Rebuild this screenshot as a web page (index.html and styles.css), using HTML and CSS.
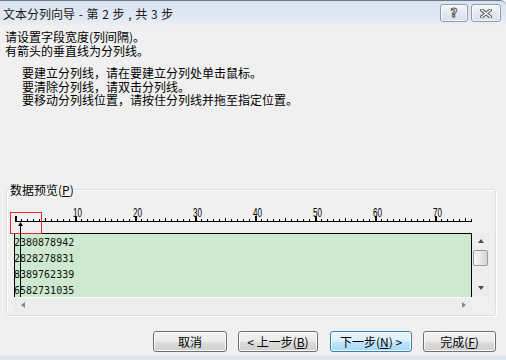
FILE: index.html
```html
<!DOCTYPE html>
<html lang="zh-CN">
<head>
<meta charset="utf-8">
<title>文本分列向导</title>
<link rel="stylesheet" href="styles.css">
</head>
<body>
<div class="window">
  <div class="titlebar">
    <span class="title">文本分列向导 - 第 2 步 , 共 3 步</span>
    <div class="caption-btns">
      <span class="cap-btn help">?</span>
      <span class="cap-btn close">
        <svg width="12" height="9" viewBox="0 0 12 9"><path d="M1.5 1 L10.5 8 M10.5 1 L1.5 8" stroke="#555" stroke-width="3.4" stroke-linecap="square"/><path d="M1.5 1 L10.5 8 M10.5 1 L1.5 8" stroke="#fff" stroke-width="1.4" stroke-linecap="square"/></svg>
      </span>
    </div>
  </div>

  <div class="intro">
    <p>请设置字段宽度(列间隔)。<br>有箭头的垂直线为分列线。</p>
    <p class="hints">要建立分列线，请在要建立分列处单击鼠标。<br>要清除分列线，请双击分列线。<br>要移动分列线位置，请按住分列线并拖至指定位置。</p>
  </div>

  <fieldset class="group">
    <legend>数据预览(<u>P</u>)</legend>
    <div class="preview">
      <svg class="ruler" width="458" height="28" viewBox="0 0 458 28">
        <defs>
          <pattern id="minor" x="1" y="14" width="6" height="2" patternUnits="userSpaceOnUse">
            <rect width="1" height="2" fill="#000"/>
          </pattern>
        </defs>
        <rect x="1" y="14" width="457" height="2" fill="url(#minor)"/>
        <rect x="1" y="16" width="457" height="1" fill="#000"/>
        <g fill="#000">
          <rect x="1" y="11" width="2" height="5"/>
          <rect x="61" y="11" width="2" height="5"/>
          <rect x="121" y="11" width="2" height="5"/>
          <rect x="181" y="11" width="2" height="5"/>
          <rect x="241" y="11" width="2" height="5"/>
          <rect x="301" y="11" width="2" height="5"/>
          <rect x="361" y="11" width="2" height="5"/>
          <rect x="421" y="11" width="2" height="5"/>
          <rect x="31" y="13" width="1" height="3"/>
          <rect x="91" y="13" width="1" height="3"/>
          <rect x="151" y="13" width="1" height="3"/>
          <rect x="211" y="13" width="1" height="3"/>
          <rect x="271" y="13" width="1" height="3"/>
          <rect x="331" y="13" width="1" height="3"/>
          <rect x="391" y="13" width="1" height="3"/>
          <rect x="451" y="13" width="1" height="3"/>
        </g>
        <g class="ruler-labels">
          <text x="59" y="12" textLength="9" lengthAdjust="spacingAndGlyphs">10</text>
          <text x="119" y="12" textLength="9" lengthAdjust="spacingAndGlyphs">20</text>
          <text x="179" y="12" textLength="9" lengthAdjust="spacingAndGlyphs">30</text>
          <text x="239" y="12" textLength="9" lengthAdjust="spacingAndGlyphs">40</text>
          <text x="299" y="12" textLength="9" lengthAdjust="spacingAndGlyphs">50</text>
          <text x="359" y="12" textLength="9" lengthAdjust="spacingAndGlyphs">60</text>
          <text x="419" y="12" textLength="9" lengthAdjust="spacingAndGlyphs">70</text>
        </g>
      </svg>
      <div class="grid">
        <div class="data">
          <div>2380878942</div>
          <div>2828278831</div>
          <div>8389762339</div>
          <div>6582731035</div>
        </div>
        <div class="vscroll">
          <span class="sb-btn"><i class="tri up"></i></span>
          <span class="thumb"></span>
          <span class="sb-btn"><i class="tri down"></i></span>
        </div>
        <div class="hscroll">
          <span class="sb-btn"><i class="tri left"></i></span>
          <span class="sb-btn"><i class="tri right"></i></span>
        </div>
        <div class="corner"></div>
      </div>
      <div class="marker-box"></div>
      <svg class="col-break" width="5" height="75" viewBox="0 0 5 75">
        <polygon points="2.5,0 5,4 0,4" fill="#000"/>
        <rect x="2" y="4" width="1" height="71" fill="#000"/>
      </svg>
    </div>
  </fieldset>

  <div class="buttons">
    <button class="btn w-cancel">取消</button>
    <button class="btn w-prev">&lt; 上一步(<u>B</u>)</button>
    <button class="btn w-next focused">下一步(<u>N</u>) &gt;</button>
    <button class="btn w-finish">完成(<u>F</u>)</button>
  </div>

  <div class="frame-bottom"></div>
</div>
</body>
</html>
```

FILE: styles.css
```css
* { box-sizing: border-box; }

html, body {
  margin: 0;
  padding: 0;
  background: #f0f0f0;
}

body {
  font-family: "Noto Sans CJK SC", "Liberation Sans", sans-serif;
  font-size: 12px;
  color: #000;
}

.window {
  width: 506px;
  height: 360px;
  display: flex;
  flex-direction: column;
  background: #f0f0f0;
  overflow: hidden;
}

/* title bar */
.titlebar {
  height: 25px;
  flex: none;
  display: flex;
  align-items: flex-start;
  padding: 3px 5px 0 3px;
  border-top: 1px solid #6d7b8c;
  border-top-right-radius: 6px;
  background: linear-gradient(#dae4f0, #dfe7f2 60%, #e8eef6);
}

.title {
  line-height: 20px;
  color: #1a1a1a;
  white-space: pre;
  word-spacing: 1px;
}

.caption-btns {
  margin-left: auto;
  display: flex;
  gap: 3px;
}

.cap-btn {
  height: 18px;
  display: flex;
  align-items: center;
  justify-content: center;
  border: 1px solid #8f9cad;
  border-radius: 3px;
  background: linear-gradient(#f6f8fb, #e4e9f0 50%, #d9e0e9);
  box-shadow: inset 0 0 0 1px rgba(255, 255, 255, 0.7);
}

.help {
  width: 28px;
  font-family: "DejaVu Sans", sans-serif;
  font-size: 12px;
  font-weight: bold;
  color: #fff;
  -webkit-text-stroke: 1px #555;
  line-height: 16px;
}

.close { width: 30px; }

/* intro text */
.intro {
  padding: 5px 0 0 5px;
  flex: none;
}

.intro p {
  margin: 0;
  line-height: 13.5px;
}

.intro .hints {
  margin-top: 9px;
  padding-left: 17px;
}

/* group box */
.group {
  flex: none;
  margin: 76px 10px 0 6px;
  padding: 8px 0 2px 0;
  border: 1px solid #d5dfe5;
  border-radius: 3px;
  box-shadow: inset 1px 1px 0 #fff, 1px 1px 0 #fff;
  min-width: 0;
}

.group legend {
  margin-left: 2px;
  padding: 0 1px;
  line-height: 14px;
  font-size: 12px;
}

.preview {
  position: relative;
  margin-left: 7px;
  width: 475px;
}

.ruler {
  display: block;
}

.ruler-labels text {
  font-family: "Liberation Sans", sans-serif;
  font-size: 12px;
  fill: #000;
}

.grid {
  display: grid;
  grid-template-columns: 458px 17px;
  grid-template-rows: 64px 16px;
}

.data {
  background: #cde9cf;
  border-top: 1px solid #000;
  border-left: 1px solid #000;
  border-right: 1px solid #000;
  padding-top: 1px;
  overflow: hidden;
  font-family: "DejaVu Sans Mono", monospace;
  font-size: 10px;
  line-height: 16px;
  color: #111;
}

.data div {
  margin-left: -1px;
}

.vscroll {
  display: flex;
  flex-direction: column;
  background: #ededed;
  padding-left: 1px;
}

.vscroll .sb-btn {
  height: 17px;
  flex: none;
}

.vscroll .thumb {
  height: 16px;
  width: 15px;
  margin-bottom: auto;
  border: 1px solid #9a9a9a;
  border-radius: 2px;
  background: linear-gradient(90deg, #f7f7f7, #e8e8e8 50%, #d4d4d4);
}

.hscroll {
  display: flex;
  justify-content: space-between;
  background: #ededed;
  border-top: 1px solid #fbfbfb;
}

.hscroll .sb-btn {
  width: 17px;
}

.sb-btn {
  display: flex;
  align-items: center;
  justify-content: center;
}

.corner {
  background: #f0f0f0;
}

.tri {
  width: 0;
  height: 0;
  display: block;
}

.tri.up {
  border-left: 3.5px solid transparent;
  border-right: 3.5px solid transparent;
  border-bottom: 4px solid #4f4f4f;
}

.tri.down {
  border-left: 3.5px solid transparent;
  border-right: 3.5px solid transparent;
  border-top: 4px solid #4f4f4f;
}

.tri.left {
  border-top: 3.5px solid transparent;
  border-bottom: 3.5px solid transparent;
  border-right: 4px solid #8a8a8a;
}

.tri.right {
  border-top: 3.5px solid transparent;
  border-bottom: 3.5px solid transparent;
  border-left: 4px solid #8a8a8a;
}

/* overlays on the preview */
.marker-box {
  position: absolute;
  left: -4px;
  top: 7px;
  width: 32px;
  height: 22px;
  border: 1px solid #e0302c;
}

.col-break {
  position: absolute;
  left: 4px;
  top: 17px;
}

/* dialog buttons */
.buttons {
  flex: none;
  display: flex;
  justify-content: flex-end;
  gap: 11px;
  margin-top: 15px;
  padding-right: 10px;
}

.btn {
  height: 21px;
  padding: 0;
  font-family: "Noto Sans CJK SC", "Liberation Sans", sans-serif;
  font-size: 12px;
  line-height: 19px;
  color: #000;
  border: 1px solid #707070;
  border-radius: 3px;
  background: linear-gradient(#f2f2f2, #ebebeb 50%, #dddddd 51%, #cfcfcf);
  box-shadow: inset 0 0 0 1px rgba(255, 255, 255, 0.8);
}

.btn.focused {
  border-color: #3c7fb1;
  background: linear-gradient(#eaf6fd, #d9f0fc 50%, #bee6fd 51%, #a7d9f5);
}

.w-cancel { width: 74px; }
.w-prev { width: 80px; }
.w-next { width: 82px; margin-left: 1px; }
.w-finish { width: 73px; }

.frame-bottom {
  margin-top: auto;
  height: 5px;
  flex: none;
  border-top: 1px solid #e7ebf1;
  background: #dae3ee;
}
```
